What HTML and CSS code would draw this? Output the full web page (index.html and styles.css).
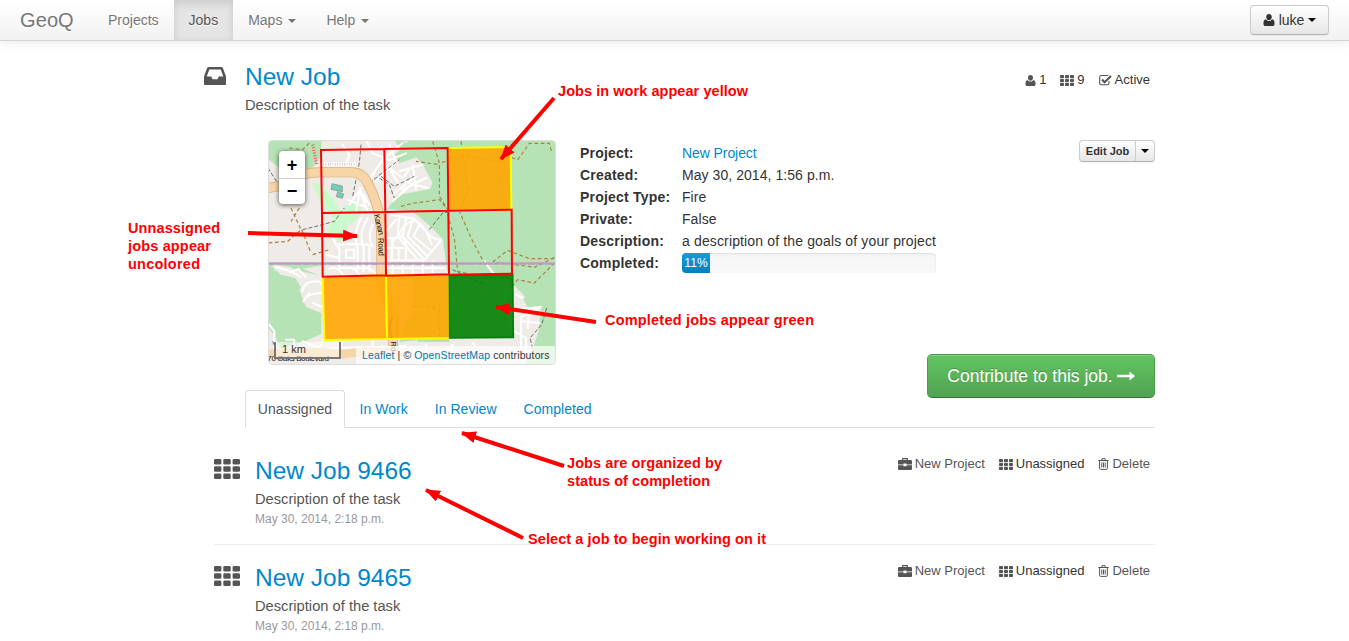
FILE: index.html
```html
<!DOCTYPE html>
<html lang="en">
<head>
<meta charset="utf-8">
<title>GeoQ - New Job</title>
<link rel="stylesheet" href="styles.css">
</head>
<body>
<svg class="defs" width="0" height="0" aria-hidden="true">
  <symbol id="i-user" viewBox="0 0 12 13"><path d="M3 3.2C3 1.300 4.300 0 6 0s3 1.300 3 3.200-1.300 3.600-3 3.600-3-1.700-3-3.600zM2.700 5.800C3.500 7 4.700 7.700 6 7.700s2.500-.7 3.300-1.900C11.400 6 12 8 12 10.500c0 1.500-.9 2.500-2.200 2.500H2.200C.9 13 0 12 0 10.500 0 8 .6 6 2.700 5.800z"/></symbol>
  <symbol id="i-th" viewBox="0 0 26 20"><g><rect width="7.400" height="5.600" rx="1.300"/><rect x="9.300" width="7.400" height="5.600" rx="1.300"/><rect x="18.600" width="7.400" height="5.600" rx="1.300"/><rect y="7.200" width="7.400" height="5.600" rx="1.300"/><rect x="9.300" y="7.200" width="7.400" height="5.600" rx="1.300"/><rect x="18.600" y="7.200" width="7.400" height="5.600" rx="1.300"/><rect y="14.400" width="7.400" height="5.600" rx="1.300"/><rect x="9.300" y="14.400" width="7.400" height="5.600" rx="1.300"/><rect x="18.600" y="14.400" width="7.400" height="5.600" rx="1.300"/></g></symbol>
  <symbol id="i-check" viewBox="0 0 13 12"><path d="M10 7v2.300c0 .8-.7 1.500-1.500 1.500H2.200C1.300 10.800.7 10.100.7 9.300V3c0-.9.600-1.500 1.500-1.500h6.300l.8.200" fill="none" stroke="currentColor" stroke-width="1.100"/><path d="M3 5.600l2.500 2.600L12 2" fill="none" stroke="currentColor" stroke-width="2.100"/></symbol>
  <symbol id="i-case" viewBox="0 0 14 12"><path fill-rule="evenodd" d="M4 2V1c0-.6.400-1 1-1h4c.6 0 1 .4 1 1v1h2.700c.7 0 1.300.6 1.300 1.300V6.500H8.500v-1h-3v1H0V3.300C0 2.600.6 2 1.300 2zm1.200 0h3.600v-.8H5.200zM0 7.300h5.500v1h3v-1H14v3.400c0 .7-.6 1.300-1.300 1.300H1.300C.6 12 0 11.400 0 10.700z"/></symbol>
  <symbol id="i-trash" viewBox="0 0 11 12"><path d="M.3 2.500h10.400M3.500 2.300L4 .7h3l.5 1.600M1.600 2.700v7.500c0 .8.500 1.200 1 1.200h5.800c.6 0 1-.4 1-1.200V2.700M3.800 4.500v5M5.500 4.500v5M7.200 4.500v5" fill="none" stroke="currentColor" stroke-width="1"/></symbol>
</svg>

<nav class="navbar">
  <a class="brand">GeoQ</a>
  <ul class="menu">
    <li>Projects</li>
    <li class="active">Jobs</li>
    <li>Maps<b class="caret"></b></li>
    <li>Help<b class="caret"></b></li>
  </ul>
  <button class="btn user-btn"><svg width="12" height="12"><use href="#i-user"/></svg><span>luke</span><b class="caret"></b></button>
</nav>

<main class="page">
  <header class="job-head">
    <svg class="inbox" viewBox="0 0 22 18"><path fill-rule="evenodd" d="M4.600 0h12.800c.7 0 1.200.3 1.500 1L22 9.500V17c0 .6-.4 1-1 1H1c-.6 0-1-.4-1-1V9.500L3.100 1c.3-.7.800-1 1.500-1zM5.300 2.500L2.700 9.600h4.500l1.400 2.700h4.800l1.400-2.700h4.500l-2.600-7.100z"/></svg>
    <div class="job-name">
      <h1>New Job</h1>
      <p>Description of the task</p>
    </div>
    <ul class="meta head-meta">
      <li><svg width="11" height="11"><use href="#i-user"/></svg><span>1</span></li>
      <li><svg width="14" height="11"><use href="#i-th"/></svg><span>9</span></li>
      <li><svg width="13" height="12"><use href="#i-check"/></svg><span class="active-txt">Active</span></li>
    </ul>
  </header>

  <section class="overview">
    <div class="map">
      <svg class="tiles" viewBox="6 6 864 675" width="288" height="225">
        <rect x="6" y="6" width="864" height="675" fill="#efebe6"/>
        <g fill="#b5e3b5">
          <path d="M6 6h160v48l-28 36H40L6 62z"/>
          <path d="M430 6h440v675H740l50-30 20-60 15-75-40-8-30-56-30-30H548l-10-60-8-60-40-40-48-40-78-10 30-40 100-20 5-20-30-54-18-20-50 18-16-25z"/>
          <path d="M6 378h534v30l-370 5-60-12-70-20-34 5z"/>
          <path d="M6 380l18 10 20 20 44 10 22 36 16 44 40 18v70l-50 22-70 22-22-40-18-25z"/>
          <path d="M384 6h28l28 42-30-8zM440 412h110v200H400l20-60 30-30z"/>
        </g>
        <path fill="#efebe6" d="M110 392l60-10h370v28l-370 6zM22 382l50 5 40 22 58 8v110l-50-20-20-50 10-20-25-20-60-20z"/>
        <path fill="#efebe6" d="M742 460l20-2 15 18-10 12 5 22 53 3-8 70-20 60-20 38H560l10-75h172zM395 612l60-5v30h-60z"/>
        <g fill="#c8facc"><path d="M138 133l28 5 35 45 24 36 20 45-20 50-45-38 25-30-45-60z"/><path d="M235 205l40-18 12 35-30 40-25-20zM365 280h-10l5-20 10 10z"/></g>
        <path fill="#b5e3b5" d="M400 205l55-20 92-10v43H420zM460 230l85-10v60l-25 10z"/>
        <g fill="none" stroke="#fff" stroke-width="6" stroke-linecap="round" stroke-linejoin="round">
          <path d="M240 80l10-30-20-30M310 125l40-60 60-50M330 130l60-60-20-50M350 75l60 45 20-25M375 100l25 40M400 100l70-20M410 130l75 20M410 155l70-35M440 80l10 75M385 165l65-50M380 190l45-40M300 6l20 40 50 20 50-20"/>
          <path d="M250 200l35-50M270 220l10-55M245 185l50 20M300 190l-20-30M280 150l30 50M285 170l20 50M210 320l60-2 40 2v80M285 240q-25 50-10 90v70M305 240q-30 50-12 90v70M320 260q-18 40 0 65M220 320v70h90M240 335h25v25h-25zM180 350l40 10M200 300l22 40M190 392q25-10 40 18M240 392q20-10 40 18M290 392q20-10 40 18"/>
          <path d="M362 300h35q8-40 40-50t60 70M378 300v70M362 330h50M375 230l70 12 50 55 30 10-50 60H365M390 245l-25 30M400 235l-5 60 60 70M420 240l-10 55 60 65M440 245l-15 50 60 60M460 260l-18 35 50 40M360 390h175M380 375v30M410 370v35M440 370v35M470 370v35M500 370v35M380 330q0-35 20-35t20 35v35M398 330v35"/>
          <path d="M30 387l42 12 30 16M72 403l25-10 22 24M110 460q2-32 50-30l8 10M125 475q15-10 40-10M140 495l30 12M112 490l18-25M10 560l15 20v50M110 610l50 20 20-40M140 650l60-20 220-5M230 605l-15 50M320 610v50M60 605h25l-5 60"/>
          <path d="M655 370l30 40M725 430l-10 60 20 80M750 470l20 10M745 515l80-8-60 30v110M765 550l55 5M745 580l35 20v50M790 510l-5 60M480 620v50M560 620l-20 50M620 615l40 50 120-10"/>
        </g>
        <g fill="none" stroke="#aa8040" stroke-width="3.500" stroke-dasharray="11 8">
          <path d="M70 30l40 5 25-25M75 210l30 65-40 35-60 5M100 210l-25 40M107 275l28 70M140 350l50-15M405 205l40-10 75-10 25 30-25-40V80l-70-10M500 10l20 65 80-20 120 20M585 10l10 60M595 70l10 90-25 60 40 90 40 75M720 52l35 14 35-50h60l8 30M545 230l20 70 10 100 35 8M680 372l45-35 65 25h75M865 358l-60 30-70-10-50-5M865 375l-60 60-50-10-25 30M480 505l40 10v80M440 505h80"/>
        </g>
        <g fill="none" stroke="#555" stroke-width="2.500" stroke-dasharray="12 6">
          <path d="M110 275l40-10 55-15 30-40M6 90l35 55M285 20l-5 55-20 100M310 135l90-70M340 120l30 20 15 40M345 115l40 30 60-30M490 275l40-50 60-10M560 395l50 25 50 20M842 510l-15 50-35 40 10 40M20 610l22 55"/>
        </g>
        <path d="M140 20l12 60" fill="none" stroke="#f55" stroke-width="9" stroke-dasharray="3 5"/>
        <path d="M165 79h105" fill="none" stroke="#fff" stroke-width="13"/>
        <path d="M165 79h105" fill="none" stroke="#bbb" stroke-width="8" stroke-dasharray="2 5"/>
        <g fill="none" stroke-linejoin="round">
          <path d="M6 150q55-5 110-41 20-7 60-6h80q35 0 50 35 42 75 40 175v120l35 110v80" stroke="#d7ad7c" stroke-width="30"/>
          <path d="M6 150q55-5 110-41 20-7 60-6h80q35 0 50 35 42 75 40 175v120l35 110v80" stroke="#f8d5a7" stroke-width="26"/>
          <path d="M6 648l150-5 80 5 50-7h110" stroke="#f8d5a7" stroke-width="26"/>
        </g>
        <path d="M198 137l31 7v17l-34-7zM215 161l18 7-4 13-18-5z" fill="#6fd0b5" stroke="#888" stroke-width="2"/>
        <path d="M6 376h864" stroke="#c89ccb" stroke-width="7"/>
        <path d="M6 378h864" stroke="#b583ba" stroke-width="2" stroke-dasharray="20 6"/>
        <g class="road"><text transform="translate(324 230) rotate(77)" textLength="64">Kanan</text><text transform="translate(336 300) rotate(88)" textLength="54">Road</text><text transform="translate(374 610) rotate(90)">Rd</text><text x="4" y="669" textLength="185">70 Oaks Boulevard</text></g>
        <g fill="#ffa500" fill-opacity=".9" stroke="#ff0" stroke-width="6">
          <path d="M547 30l187-3 2 188-189 3z"/><path d="M170 416l190-4 3 191-188 3z"/><path d="M360 412l190-4 1 192-188 3z"/>
        </g>
        <path d="M378 540q-12 30 0 60" fill="none" stroke="#c87b10" stroke-width="5" stroke-dasharray="4 3" opacity=".6"/>
        <path d="M550 411l190-2 2 189-191 2z" fill="#008000" fill-opacity=".9" stroke="#007d0c" stroke-width="5"/>
        <g fill="none" stroke="#f00" stroke-width="6">
          <path d="M165 36l190-3 3 189-190 3zM355 33l190-3 2 188-189 4zM168 225l190-3 2 190-190 4zM358 222l189-4 2 191-189 4zM547 218l190-3 1 192-189 3z"/>
        </g>
      </svg>
      <div class="zoom-ctl"><span>+</span><span>−</span></div>
      <div class="scale">1 km</div>
      <div class="credit"><a>Leaflet</a> | © <a>OpenStreetMap</a> contributors</div>
    </div>

    <dl class="facts">
      <dt>Project:</dt><dd><a>New Project</a></dd>
      <dt>Created:</dt><dd>May 30, 2014, 1:56 p.m.</dd>
      <dt>Project Type:</dt><dd>Fire</dd>
      <dt>Private:</dt><dd>False</dd>
      <dt>Description:</dt><dd class="descr">a description of the goals of your project</dd>
      <dt>Completed:</dt><dd><div class="progress"><div class="bar" style="width:11%">11%</div></div></dd>
    </dl>

    <div class="actions">
      <div class="btn edit-btn"><span>Edit Job</span><span class="drop"><b class="caret"></b></span></div>
      <button class="go-btn"><span>Contribute to this job.</span><svg width="18" height="10" viewBox="0 0 18 10"><path d="M0 3.700h12.500V.5L18 5l-5.500 4.500V6.300H0z" fill="#fff"/></svg></button>
    </div>
  </section>

  <ul class="tabs">
    <li class="active">Unassigned</li><li>In Work</li><li>In Review</li><li>Completed</li>
  </ul>

  <section class="jobs">
    <article class="job">
      <svg class="grid-icon" width="26" height="20"><use href="#i-th"/></svg>
      <div class="job-info"><h2>New Job 9466</h2><p>Description of the task</p><time>May 30, 2014, 2:18 p.m.</time></div>
      <ul class="meta">
        <li><svg width="14" height="12"><use href="#i-case"/></svg><span class="soft">New Project</span></li>
        <li><svg width="14" height="11"><use href="#i-th"/></svg><span>Unassigned</span></li>
        <li><svg width="11" height="12"><use href="#i-trash"/></svg><span class="soft">Delete</span></li>
      </ul>
    </article>
    <article class="job">
      <svg class="grid-icon" width="26" height="20"><use href="#i-th"/></svg>
      <div class="job-info"><h2>New Job 9465</h2><p>Description of the task</p><time>May 30, 2014, 2:18 p.m.</time></div>
      <ul class="meta">
        <li><svg width="14" height="12"><use href="#i-case"/></svg><span class="soft">New Project</span></li>
        <li><svg width="14" height="11"><use href="#i-th"/></svg><span>Unassigned</span></li>
        <li><svg width="11" height="12"><use href="#i-trash"/></svg><span class="soft">Delete</span></li>
      </ul>
    </article>
  </section>
</main>

<!-- Callouts drawn over the page -->
<svg class="notes" width="1349" height="641" viewBox="0 0 1349 641">
  <defs><marker id="tip" viewBox="0 0 14 11" refX="13" refY="5.500" markerWidth="15" markerHeight="12" preserveAspectRatio="none" markerUnits="userSpaceOnUse" orient="auto"><path d="M0 0l14 5.500L0 11z" fill="#f00"/></marker></defs>
  <g stroke="#f00" stroke-width="4">
    <path d="M554 98L501 159" marker-end="url(#tip)"/>
    <path d="M248 233L357 236" marker-end="url(#tip)"/>
    <path d="M596 322L496 307" marker-end="url(#tip)"/>
    <path d="M564 466L462 433" marker-end="url(#tip)"/>
    <path d="M523 538L426 490" marker-end="url(#tip)"/>
  </g>
  <g class="note-text">
    <text x="558" y="96" textLength="190">Jobs in work appear yellow</text>
    <text x="128" y="233" textLength="92">Unnassigned</text>
    <text x="128" y="251" textLength="83">jobs appear</text>
    <text x="128" y="269" textLength="72">uncolored</text>
    <text x="605" y="325" textLength="209">Completed jobs appear green</text>
    <text x="567" y="468" textLength="155">Jobs are organized by</text>
    <text x="567" y="486" textLength="143">status of completion</text>
    <text x="528" y="544" textLength="238">Select a job to begin working on it</text>
  </g>
</svg>
</body>
</html>
```
FILE: styles.css
```css
* { box-sizing: border-box; }
body { margin: 0; height: 641px; overflow: hidden; background: #fff; color: #333; font: 14px/20px "Liberation Sans", Arial, sans-serif; }
ul, dl, dd, h1, h2, p { margin: 0; padding: 0; list-style: none; }
a { color: #08c; }
svg { flex: none; fill: currentColor; }
.defs { position: absolute; }

.navbar { display: flex; align-items: stretch; height: 41px; padding-left: 20px; border-bottom: 1px solid #d4d4d4; background: linear-gradient(#fff, #f2f2f2); box-shadow: 0 1px 10px rgba(0,0,0,.1); color: #777; text-shadow: 0 1px 0 #fff; }
.brand { width: 73px; color: #777; font-size: 20px; line-height: 40px; letter-spacing: .1px; }
.menu { display: flex; flex: 1; }
.menu li { padding: 0 15px; line-height: 40px; }
.menu .active { padding: 0 15px; background: #e5e5e5; color: #555; box-shadow: inset 0 3px 8px rgba(0,0,0,.125); }
.caret { display: inline-block; margin-left: 6px; vertical-align: middle; border: 4px solid transparent; border-top-color: currentColor; border-bottom: 0; }
.btn { border: 1px solid #ccc; border-bottom-color: #b3b3b3; border-radius: 4px; background: linear-gradient(#fff, #e6e6e6); box-shadow: inset 0 1px 0 rgba(255,255,255,.2), 0 1px 2px rgba(0,0,0,.05); color: #333; font: inherit; }
.user-btn { display: flex; align-items: center; justify-content: center; gap: 4px; width: 79px; height: 30px; margin: 5px 20px 0 0; padding: 0; }
.user-btn .caret { margin-left: 0; color: #000; }

.page { width: 951px; margin-left: 204px; }
.job-head { display: flex; height: 99px; padding-top: 22px; }
.inbox { width: 22px; height: 18px; margin: 4px 19px 0 0; color: #555; }
.job-name { flex: 1; }
h1, h2 { color: #08c; font-size: 24.500px; font-weight: 400; line-height: 28px; }
h2 { padding-top: 1px; }
.job-name p { padding-top: 4px; color: #555; font-size: 14.700px; }
.meta { display: flex; gap: 14px; font-size: 13px; }
.meta li { display: flex; align-items: center; gap: 3px; height: 20px; }
.meta svg, .soft { color: #555; }
.head-meta { padding: 7px 5px 0 0; }

.overview { display: flex; height: 250px; margin-left: 64px; }
.map { display: grid; flex: none; width: 288px; height: 225px; overflow: hidden; border: 1px solid #ddd; border-radius: 4px; grid-template: 1fr 28px / 1fr; }
.tiles { grid-area: 1 / 1 / 3 / 2; margin: -1px; }
.road { fill: #111; font-size: 24px; }
.zoom-ctl { z-index: 1; grid-area: 1 / 1; width: 26px; height: 53px; margin: 10px 0 0 10px; border-radius: 4px; background: #fff; box-shadow: 0 1px 5px rgba(0,0,0,.65); color: #000; font-size: 18px; font-weight: 700; line-height: 28px; text-align: center; }
.zoom-ctl span { display: block; height: 27px; }
.zoom-ctl span + span { border-top: 1px solid #ccc; line-height: 25px; }
.scale { z-index: 1; grid-area: 2 / 1; width: 67px; height: 17px; margin: 6px 0 0 5px; padding-left: 6px; border: 2px solid #777; border-top: 0; background: rgba(255,255,255,.5); font-size: 11px; line-height: 15px; }
.credit { z-index: 1; grid-area: 2 / 1; align-self: end; justify-self: end; width: 199px; height: 18px; padding-left: 6px; background: rgba(255,255,255,.7); font-size: 10.500px; line-height: 18px; letter-spacing: .13px; white-space: nowrap; }
.credit a { color: #0078a8; }
.facts { display: grid; flex: none; grid-template-columns: 102px 254px; grid-auto-rows: 22px; margin: 2px 0 0 24px; line-height: 22px; }
.facts dt { font-weight: 700; letter-spacing: .2px; }
.facts dd { letter-spacing: .06px; white-space: nowrap; }
.facts dd a { letter-spacing: -.08px; }
.facts .descr { letter-spacing: .14px; }
.progress { width: 254px; height: 20px; margin-top: 1px; overflow: hidden; border-radius: 4px; background: linear-gradient(#f5f5f5, #f9f9f9); box-shadow: inset 0 1px 2px rgba(0,0,0,.1); }
.bar { height: 20px; background: linear-gradient(#149bdf, #0480be); color: #fff; font-size: 12px; line-height: 20px; text-align: center; }
.actions { display: flex; flex: 0 0 219px; min-width: 0; flex-direction: column; align-items: flex-end; justify-content: space-between; height: 258px; }
.edit-btn { display: flex; width: 76px; height: 22px; font-size: 11px; font-weight: 700; line-height: 20px; }
.edit-btn > span:first-child { flex: 1; text-align: center; }
.drop { width: 19px; border-left: 1px solid #ccc; text-align: center; }
.drop .caret { margin: -3px 0 0; color: #000; }
.go-btn { display: flex; flex: none; align-items: center; justify-content: center; gap: 4px; width: 228px; height: 44px; border: 1px solid #4a9c4a; border-bottom-color: #387038; border-radius: 5px; background: linear-gradient(#62c462, #51a351); box-shadow: inset 0 1px 0 rgba(255,255,255,.2); color: #fff; font: 17.500px "Liberation Sans", Arial, sans-serif; text-shadow: 0 -1px 0 rgba(0,0,0,.25); white-space: nowrap; }

.tabs { display: flex; height: 38px; margin-left: 41px; border-bottom: 1px solid #ddd; }
.tabs li { height: 38px; padding: 0 13.500px; color: #08c; line-height: 38px; letter-spacing: .04px; }
.tabs .active { width: 100px; margin-right: 1px; padding: 0; border: 1px solid #ddd; border-bottom-color: #fff; border-radius: 4px 4px 0 0; background: #fff; color: #555; line-height: 36px; text-align: center; }

.jobs { margin-left: 10px; }
.job { display: flex; height: 107px; padding-top: 18px; }
.job:first-child { height: 117px; padding-top: 28px; border-bottom: 1px solid #eee; }
.grid-icon { margin: 3px 15px 0 0; color: #555; }
.job-info { flex: 1; }
.job-info p { padding-top: 4px; color: #555; font-size: 14.700px; }
.job-info time { display: block; padding-top: 3px; color: #999; font-size: 12px; line-height: 15px; }
.job .meta { padding-right: 5px; margin-top: -2px; }

.notes { position: absolute; top: 0; left: 0; pointer-events: none; }
.note-text { fill: #f00; font-size: 14.500px; font-weight: 700; }
```
